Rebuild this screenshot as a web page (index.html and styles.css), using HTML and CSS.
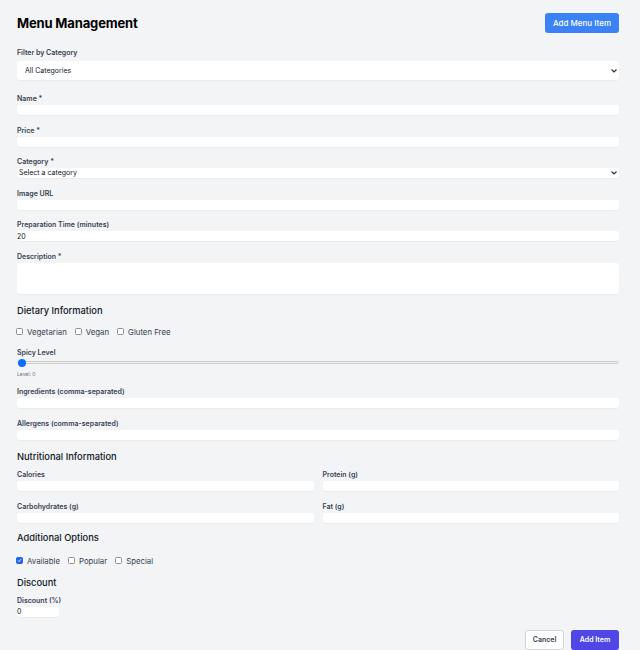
FILE: index.html
```html
<!DOCTYPE html>
<html lang="en">
<head>
<meta charset="utf-8">
<title>Menu Management</title>
<link rel="stylesheet" href="styles.css">
</head>
<body>
<div class="page">
  <header class="header">
    <h1 class="title">Menu Management</h1>
    <button class="btn btn-blue">Add Menu Item</button>
  </header>

  <div class="filter">
    <label class="label">Filter by Category</label>
    <select class="select select-filter"><option>All Categories</option></select>
  </div>

  <form class="form">
    <div class="field">
      <label class="label">Name *</label>
      <input class="input" type="text">
    </div>
    <div class="field">
      <label class="label">Price *</label>
      <input class="input" type="text">
    </div>
    <div class="field">
      <label class="label">Category *</label>
      <select class="select select-small"><option>Select a category</option></select>
    </div>
    <div class="field">
      <label class="label">Image URL</label>
      <input class="input" type="text">
    </div>
    <div class="field">
      <label class="label">Preparation Time (minutes)</label>
      <input class="input" type="text" value="20">
    </div>
    <div class="field">
      <label class="label">Description *</label>
      <textarea class="input textarea"></textarea>
    </div>

    <h2 class="section-title first">Dietary Information</h2>
    <div class="checks">
      <label class="check"><input type="checkbox" class="cb"><span>Vegetarian</span></label>
      <label class="check"><input type="checkbox" class="cb"><span>Vegan</span></label>
      <label class="check"><input type="checkbox" class="cb"><span>Gluten Free</span></label>
    </div>

    <div class="field spicy">
      <label class="label">Spicy Level</label>
      <input type="range" class="range" min="0" max="5" value="0">
      <span class="level">Level: 0</span>
    </div>

    <div class="field ingredients">
      <label class="label">Ingredients (comma-separated)</label>
      <input class="input" type="text">
    </div>
    <div class="field">
      <label class="label">Allergens (comma-separated)</label>
      <input class="input" type="text">
    </div>

    <h2 class="section-title">Nutritional Information</h2>
    <div class="grid">
      <div class="field">
        <label class="label">Calories</label>
        <input class="input" type="text">
      </div>
      <div class="field">
        <label class="label">Protein (g)</label>
        <input class="input" type="text">
      </div>
      <div class="field">
        <label class="label">Carbohydrates (g)</label>
        <input class="input" type="text">
      </div>
      <div class="field">
        <label class="label">Fat (g)</label>
        <input class="input" type="text">
      </div>
    </div>

    <h2 class="section-title tight">Additional Options</h2>
    <div class="checks checks-opts">
      <label class="check"><input type="checkbox" class="cb" checked><span>Available</span></label>
      <label class="check"><input type="checkbox" class="cb"><span>Popular</span></label>
      <label class="check"><input type="checkbox" class="cb"><span>Special</span></label>
    </div>

    <h2 class="section-title">Discount</h2>
    <div class="field discount">
      <label class="label">Discount (%)</label>
      <input class="input input-small" type="text" value="0">
    </div>

    <div class="actions">
      <button type="button" class="btn btn-white">Cancel</button>
      <button type="button" class="btn btn-indigo">Add Item</button>
    </div>
  </form>
</div>
</body>
</html>
```
FILE: styles.css
```css
* { box-sizing: border-box; }
html, body { margin: 0; padding: 0; }
body {
  background: #f3f4f6;
  font-family: Inter, "Open Sans", "Liberation Sans", sans-serif;
  color: #111827;
}
.page { padding: 13px 21px 0 17px; }

.header {
  display: flex;
  justify-content: space-between;
  align-items: center;
  height: 20px;
}
.title {
  margin: 0;
  font-size: 13px;
  font-weight: 700;
  color: #000;
  letter-spacing: -0.15px;
}
.btn {
  font-family: inherit;
  border: none;
  border-radius: 3px;
  cursor: pointer;
  padding: 0;
  font-weight: 500;
}
.btn-blue {
  background: #3b82f6;
  color: #fff;
  width: 74px;
  height: 20px;
  font-size: 8px;
}

.filter { margin-top: 15px; display: flex; flex-direction: column; }
.filter .label { margin-bottom: 4px; }

.label {
  display: block;
  font-size: 7px;
  line-height: 9px;
  font-weight: 600;
  color: #374151;
}
.select {
  -webkit-appearance: none;
  appearance: none;
  font-family: inherit;
  border: none;
  background-color: #fff;
  background-image: url("data:image/svg+xml;utf8,<svg xmlns='http://www.w3.org/2000/svg' width='6' height='4' viewBox='0 0 6 4'><path d='M0.5 0.5 L3 3 L5.5 0.5' fill='none' stroke='%23333' stroke-width='1.2'/></svg>");
  background-repeat: no-repeat;
  background-position: right 2px center;
  background-size: 6px 4px;
  border-radius: 3px;
  color: #111827;
  width: 100%;
  box-shadow: 0 1px 1px rgba(0,0,0,0.04);
  outline: none;
}
.select-filter { height: 19px; font-size: 7px; padding: 0 8px; }
.select-small { height: 10px; font-size: 7px; padding: 0 0 0 2px; line-height: 10px; }

.form { margin-top: 14px; display: flex; flex-direction: column; }
.field { display: flex; flex-direction: column; }
.field + .field { margin-top: 10.6px; }
.field .label { margin-bottom: 2px; }
.input {
  font-family: inherit;
  border: none;
  background: #fff;
  border-radius: 3px;
  height: 10px;
  width: 100%;
  padding: 0;
  font-size: 7px;
  color: #111827;
  box-shadow: 0 1px 1px rgba(0,0,0,0.04);
  outline: none;
}
.textarea { height: 31px; resize: none; display: block; }
.input-small { width: 42px; }

.section-title {
  margin: 10px 0 0;
  font-size: 9.3px;
  line-height: 14px;
  font-weight: 500;
  color: #111827;
}
.section-title.tight { margin-top: 8px; }

.checks {
  display: flex;
  gap: 9px;
  margin-top: 9px;
  height: 10px;
  align-items: center;
}
.checks-opts { margin-top: 11px; }
.check {
  display: flex;
  align-items: center;
  gap: 4px;
  font-size: 7.8px;
  color: #374151;
}
.cb {
  -webkit-appearance: none;
  appearance: none;
  margin: 0 0 0 -1px;
  width: 7px;
  height: 7px;
  border: 1px solid #8f8f8f;
  border-radius: 1.5px;
  background: #fff;
}
.cb:checked {
  border-color: #2563eb;
  background-color: #2563eb;
  background-image: url("data:image/svg+xml;utf8,<svg xmlns='http://www.w3.org/2000/svg' width='5' height='5' viewBox='0 0 5 5'><path d='M1 2.6 L2 3.6 L4 1.2' fill='none' stroke='white' stroke-width='0.9'/></svg>");
  background-size: 5px 5px;
  background-position: center;
  background-repeat: no-repeat;
}

.field.spicy { margin-top: 11px; }
.range {
  -webkit-appearance: none;
  appearance: none;
  width: 100%;
  height: 8px;
  margin: 0;
  background: transparent;
}
.range::-webkit-slider-runnable-track {
  height: 3px;
  background: #efefef;
  border: 1px solid #cfcfcf;
  border-radius: 2px;
}
.range::-webkit-slider-thumb {
  -webkit-appearance: none;
  width: 8px;
  height: 8px;
  border-radius: 50%;
  background: #0b6cff;
  margin-top: -3.5px;
  border: none;
}
.level {
  font-size: 5px;
  line-height: 7px;
  margin-top: 4px;
  color: #6b7280;
}
.field.ingredients { margin-top: 9px; }

.grid {
  margin-top: 6px;
  display: grid;
  grid-template-columns: 1fr 1fr;
  column-gap: 9px;
  row-gap: 11px;
}
.grid .field + .field { margin-top: 0; }

.field.discount { margin-top: 6px; }

.actions {
  margin-top: 13px;
  display: flex;
  justify-content: flex-end;
  gap: 7px;
}
.btn-white {
  background: #fff;
  border: 1px solid #d1d5db;
  color: #374151;
  width: 39px;
  height: 20px;
  font-size: 7px;
  font-weight: 600;
}
.btn-indigo {
  background: #4f46e5;
  color: #fff;
  width: 48px;
  height: 20px;
  font-size: 7px;
  font-weight: 600;
}
```
